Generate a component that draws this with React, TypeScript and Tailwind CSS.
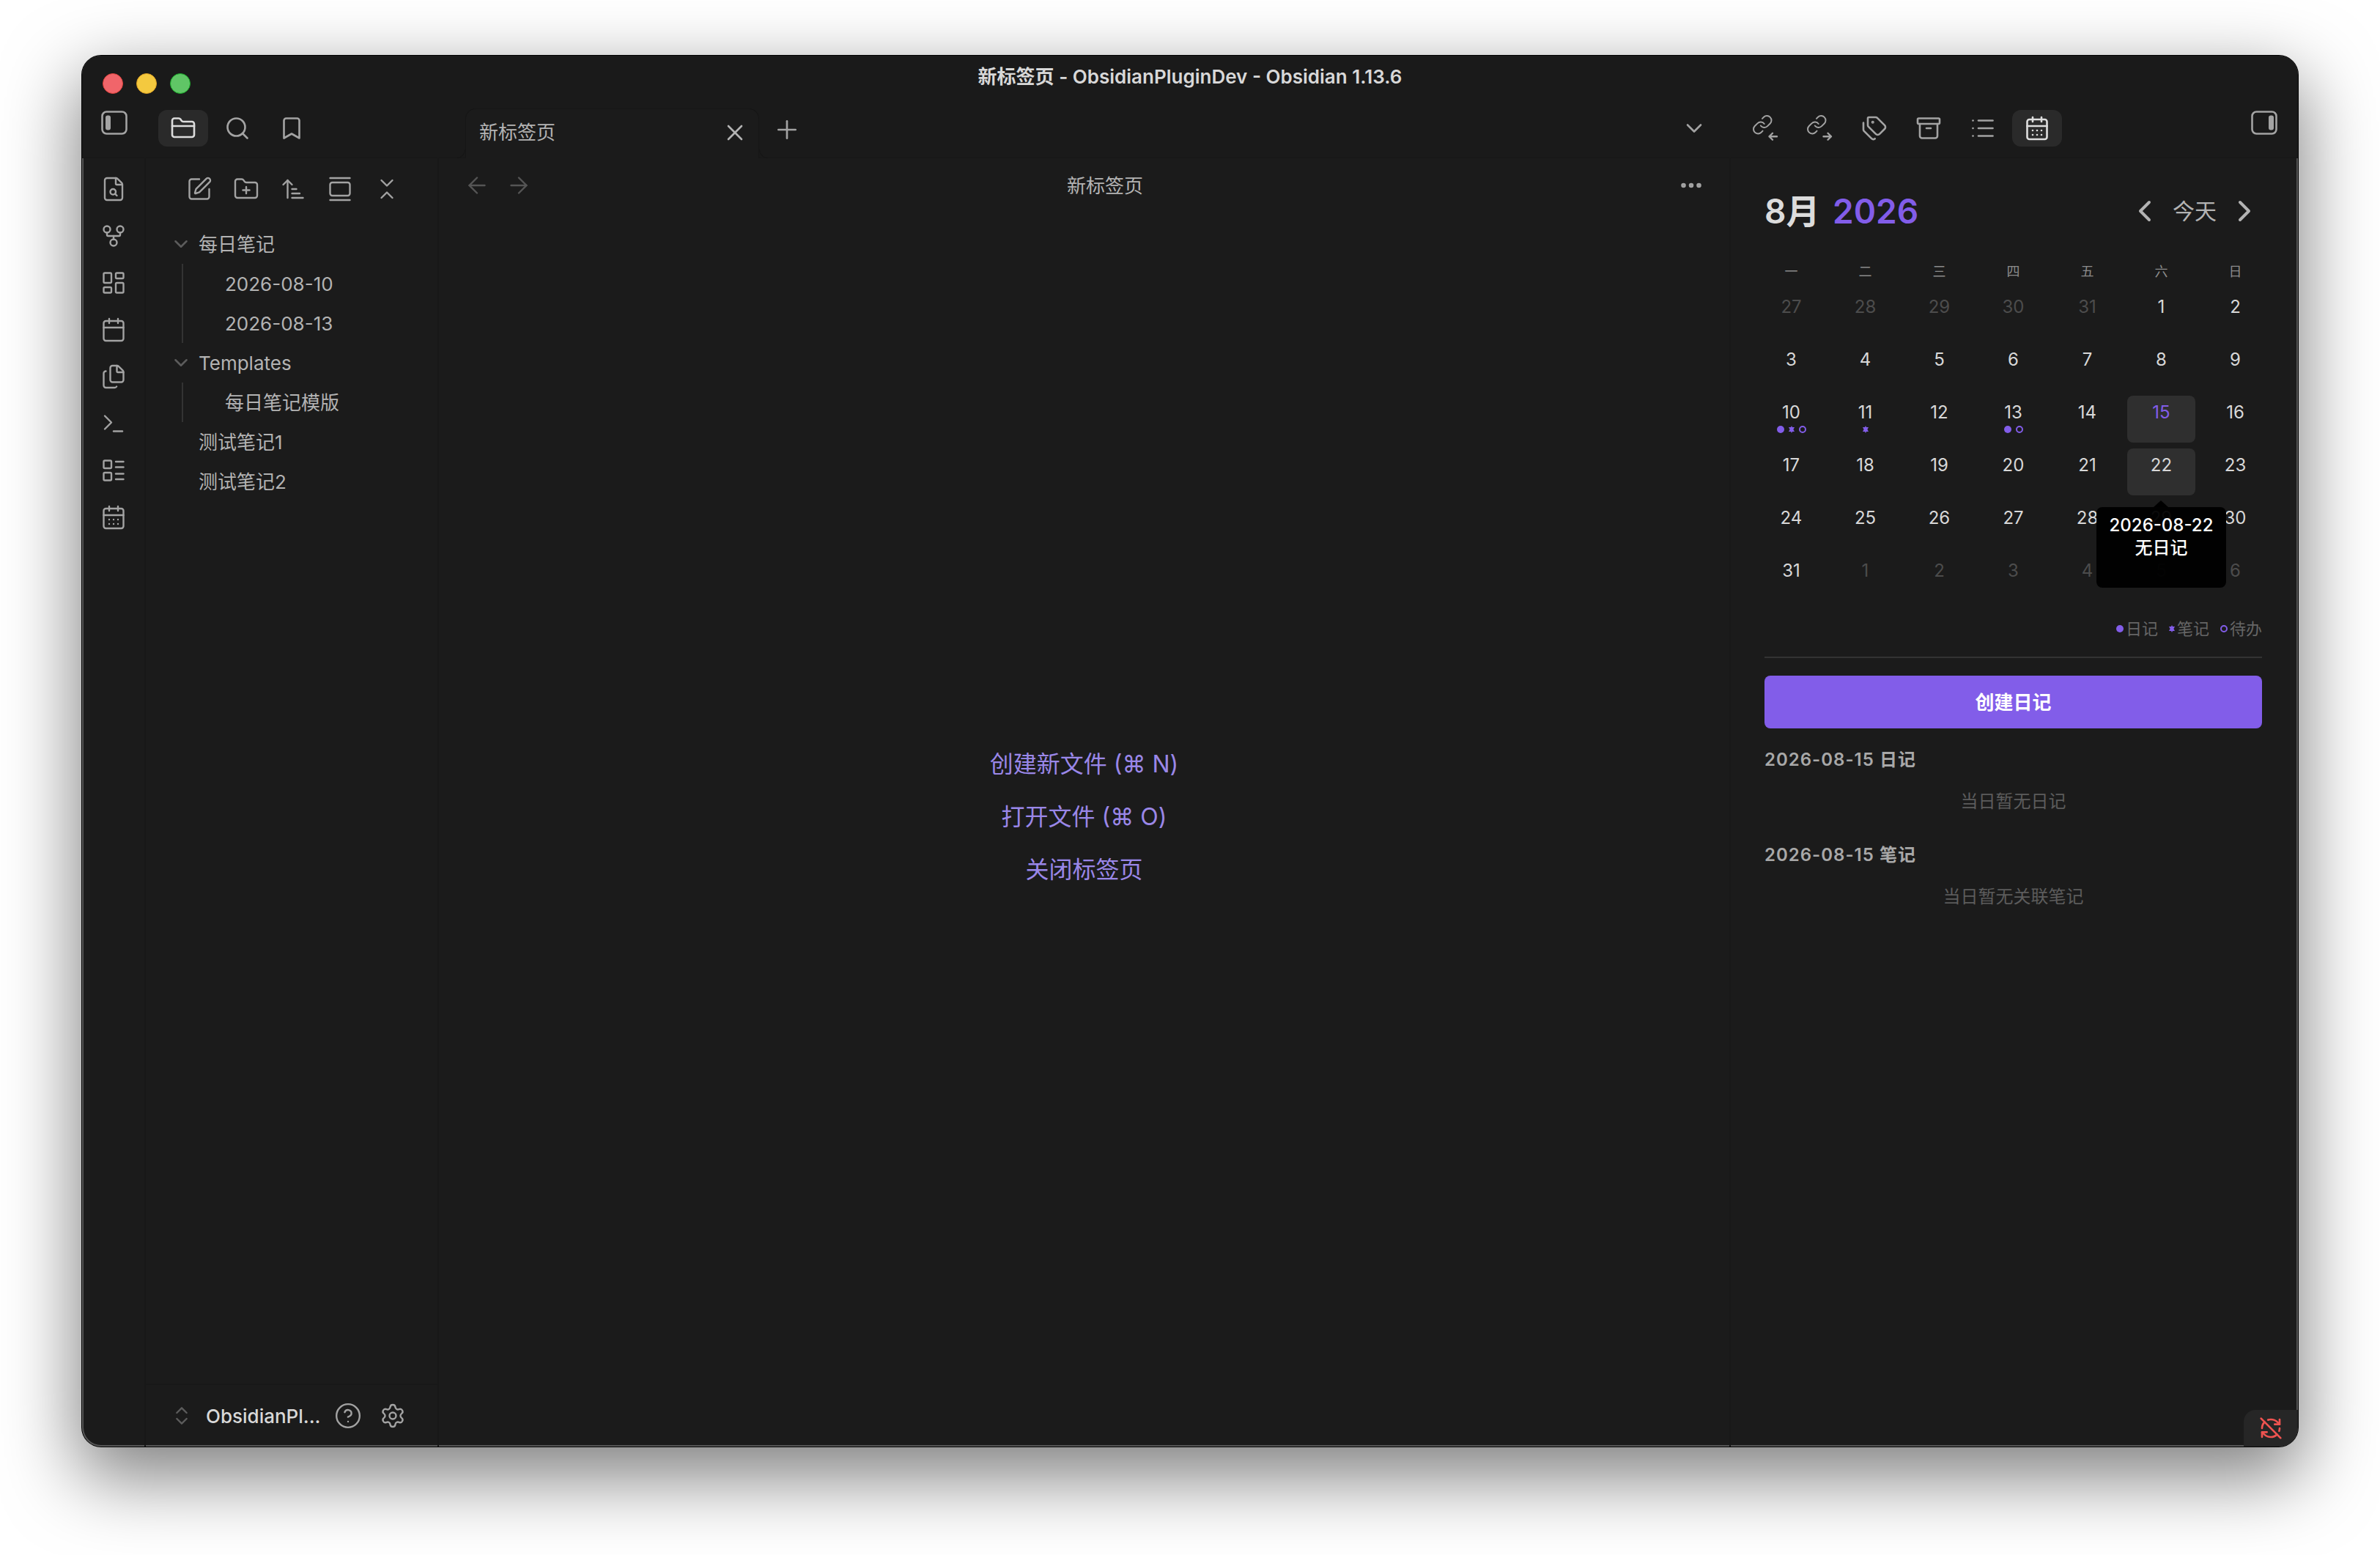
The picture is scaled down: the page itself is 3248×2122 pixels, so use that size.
import {
  Archive,
  ArrowLeft,
  ArrowRight,
  ArrowUpNarrowWide,
  Bookmark,
  Calendar,
  CalendarDays,
  ChevronDown,
  ChevronLeft,
  ChevronRight,
  ChevronsDownUp,
  ChevronsUpDown,
  CircleHelp,
  Ellipsis,
  FileSearch,
  Files,
  FolderClosed,
  FolderPlus,
  GalleryVertical,
  GitFork,
  LayoutDashboard,
  LayoutList,
  List,
  Plus,
  RefreshCwOff,
  Search,
  Settings,
  SquarePen,
  Tags,
  Terminal,
  X,
} from 'lucide-react';
import type { ReactNode } from 'react';

const ribbonIcons = [FileSearch, GitFork, LayoutDashboard, Calendar, Files, Terminal, LayoutList, CalendarDays];
const navIcons = [SquarePen, FolderPlus, ArrowUpNarrowWide, GalleryVertical, ChevronsDownUp];
const weekdays = ['一', '二', '三', '四', '五', '六', '日'];

type Day = { n: number; muted?: boolean; dots?: string[] };

const days: Day[] = [
  ...[27, 28, 29, 30, 31].map((n) => ({ n, muted: true })),
  ...Array.from({ length: 31 }, (_, i) => ({ n: i + 1 })),
  ...[1, 2, 3, 4, 5, 6].map((n) => ({ n, muted: true })),
];
days[14].dots = ['solid', 'star', 'ring'];
days[15].dots = ['star'];
days[17].dots = ['solid', 'ring'];

function Dot({ kind }: { kind: string }) {
  if (kind === 'solid') return <span className="block size-[10px] rounded-full bg-[#825de9]" />;
  if (kind === 'ring') return <span className="block size-[10px] rounded-full border-2 border-[#825de9]" />;
  return (
    <svg width="8" height="10" viewBox="0 0 8 10" className="block fill-[#825de9]">
      <polygon points="4,0 5,2 8,2 6.4,5 8,8 5,8 4,10 3,8 0,8 1.6,5 0,2 3,2" />
    </svg>
  );
}

function PanelToggle({ right }: { right?: boolean }) {
  return (
    <svg width="36" height="33" viewBox="0 0 36 33" fill="none" className="shrink-0">
      <rect x="1.5" y="1.5" width="33" height="30" rx="6" stroke="#a3a3a3" strokeWidth="2.6" />
      <rect x={right ? 24 : 6} y="6.5" width="7" height="20" rx="3" fill="#a3a3a3" />
    </svg>
  );
}

function LinkArrow({ out }: { out?: boolean }) {
  return (
    <svg width="36" height="36" viewBox="0 0 24 24" fill="none" stroke="#a3a3a3" strokeWidth="1.6" strokeLinecap="round" strokeLinejoin="round">
      <g transform="translate(-1 -1) scale(0.82)">
        <path d="M10 13a5 5 0 0 0 7.54.54l3-3a5 5 0 0 0-7.07-7.07l-1.72 1.71" />
        <path d="M14 11a5 5 0 0 0-7.54-.54l-3 3a5 5 0 0 0 7.07 7.07l1.71-1.71" />
      </g>
      {out ? <path d="M15 19.5h7m-3-3 3 3-3 3" /> : <path d="M22 19.5h-7m3-3-3 3 3 3" />}
    </svg>
  );
}

function TabButton({ active, children }: { active?: boolean; children: ReactNode }) {
  return (
    <div
      className={`flex h-[50px] w-[68px] items-center justify-center rounded-[12px] ${
        active ? 'bg-[#2a2a2a] text-[#dcdcdc]' : 'text-[#a3a3a3]'
      }`}
    >
      {children}
    </div>
  );
}

function TreeRow({ indent, chevron, children }: { indent?: boolean; chevron?: boolean; children: ReactNode }) {
  return (
    <div className={`flex h-[54px] items-center text-[26px] text-[#b3b3b3] ${indent ? 'pl-[57px]' : 'pl-[33px]'}`}>
      {chevron && <ChevronDown size={30} strokeWidth={2} className="-ml-[39px] mr-[9px] shrink-0 text-[#5c5c5c]" />}
      {children}
    </div>
  );
}

function LegendItem({ kind, label }: { kind: string; label: string }) {
  return (
    <div className="flex items-center gap-[3px]">
      <Dot kind={kind} />
      <span>{label}</span>
    </div>
  );
}

export default function App() {
  return (
    <div className="h-[2122px] w-[3248px] overflow-hidden bg-white pl-[112px] pt-[76px] font-['Inter','Noto_Sans_CJK_SC',sans-serif]">
      <div className="relative flex h-[1898px] w-[3024px] flex-col overflow-hidden rounded-[26px] bg-[#1b1b1b] shadow-[inset_0_0_0_2px_#555,0_0_0_1px_#000,0_36px_100px_6px_rgba(0,0,0,0.5)]">
        {/* title bar */}
        <div className="grid h-[58px] shrink-0 grid-cols-[1fr_auto_1fr] bg-[#1a1a1a]">
          <div className="flex gap-[18px] pl-[28px] pt-[24px]">
            <span className="size-[28px] rounded-full border border-[#e0443e] bg-[#f1656a]" />
            <span className="size-[28px] rounded-full border border-[#dea123] bg-[#f4c93f]" />
            <span className="size-[28px] rounded-full border border-[#1aab29] bg-[#60c566]" />
          </div>
          <div className="pt-[12px] text-[26px] font-semibold leading-[34px] text-[#d8d8d8]">
            新标签页 - ObsidianPluginDev - Obsidian 1.13.6
          </div>
          <div />
        </div>

        {/* tab row */}
        <div className="flex h-[82px] shrink-0 items-start border-b border-[#171717] bg-[#1a1a1a] pl-[26px] pr-[28px] pt-[14px]">
          <div className="mt-[3px]">
            <PanelToggle />
          </div>
          <div className="ml-[42px] mt-[2px] flex gap-[6px]">
            <TabButton active>
              <FolderClosed size={36} strokeWidth={1.75} />
            </TabButton>
            <TabButton>
              <Search size={36} strokeWidth={1.75} />
            </TabButton>
            <TabButton>
              <Bookmark size={36} strokeWidth={1.75} />
            </TabButton>
          </div>
          <div className="relative ml-[203px] flex h-[68px] w-[401px] items-start rounded-t-[14px] border border-b-0 border-[#161616] bg-[#1b1b1b] pl-[18px] pr-[14px] pt-[14px] text-[26px] leading-[36px] text-[#b3b3b3]">
            <span className="absolute -left-[13px] bottom-0 size-[12px] rounded-br-[12px] border-b border-r border-[#161616]" />
            <span className="absolute -right-[13px] bottom-0 size-[12px] rounded-bl-[12px] border-b border-l border-[#161616]" />
            <span className="flex-1">新标签页</span>
            <X size={36} strokeWidth={1.75} className="text-[#b3b3b3]" />
          </div>
          <Plus size={40} strokeWidth={1.6} className="ml-[18px] mt-[9px] text-[#a3a3a3]" />
          <div className="flex-1" />
          <ChevronDown size={36} strokeWidth={1.75} className="mr-[46px] mt-[9px] text-[#a3a3a3]" />
          <div className="mt-[2px] flex gap-[6px]">
            <TabButton>
              <LinkArrow />
            </TabButton>
            <TabButton>
              <LinkArrow out />
            </TabButton>
            <TabButton>
              <Tags size={36} strokeWidth={1.75} />
            </TabButton>
            <TabButton>
              <Archive size={36} strokeWidth={1.75} />
            </TabButton>
            <TabButton>
              <List size={36} strokeWidth={1.75} />
            </TabButton>
            <TabButton active>
              <CalendarDays size={36} strokeWidth={1.75} />
            </TabButton>
          </div>
          <div className="ml-[258px] mt-[3px]">
            <PanelToggle right />
          </div>
        </div>

        {/* body */}
        <div className="flex min-h-0 flex-1">
          <div className="flex w-[87px] shrink-0 flex-col items-center gap-[28px] border-r-2 border-[#181818] pt-[24px] text-[#a3a3a3]">
            {ribbonIcons.map((Icon, i) => (
              <Icon key={i} size={36} strokeWidth={1.6} />
            ))}
          </div>

          <div className="flex w-[400px] shrink-0 flex-col border-r-2 border-[#181818]">
            <div className="flex gap-[28px] pl-[55px] pt-[24px] text-[#a3a3a3]">
              {navIcons.map((Icon, i) => (
                <Icon key={i} size={36} strokeWidth={1.6} />
              ))}
            </div>
            <div className="mt-[30px] flex-1 pl-[39px]">
              <TreeRow chevron>每日笔记</TreeRow>
              <div className="ml-[10px] border-l-2 border-[#333]">
                <TreeRow indent>2026-08-10</TreeRow>
                <TreeRow indent>2026-08-13</TreeRow>
              </div>
              <TreeRow chevron>Templates</TreeRow>
              <div className="ml-[10px] border-l-2 border-[#333]">
                <TreeRow indent>每日笔记模版</TreeRow>
              </div>
              <TreeRow>测试笔记1</TreeRow>
              <TreeRow>测试笔记2</TreeRow>
            </div>
            <div className="flex h-[86px] shrink-0 items-center border-t-2 border-[#181818] pl-[33px] text-[#a3a3a3]">
              <ChevronsUpDown size={32} strokeWidth={1.75} className="text-[#5c5c5c]" />
              <span className="ml-[17px] w-[175px] text-[26px] font-medium text-[#d8d8d8]">ObsidianPl...</span>
              <CircleHelp size={38} strokeWidth={1.5} />
              <Settings size={36} strokeWidth={1.6} className="ml-[24px]" />
            </div>
          </div>

          <div className="flex min-w-0 flex-1 flex-col">
            <div className="flex h-[74px] shrink-0 items-center px-[34px]">
              <div className="flex gap-[21px] text-[#555]">
                <ArrowLeft size={36} strokeWidth={1.6} />
                <ArrowRight size={36} strokeWidth={1.6} />
              </div>
              <div className="flex-1 text-center text-[26px] text-[#b3b3b3]">新标签页</div>
              <Ellipsis size={36} strokeWidth={2.4} className="text-[#a3a3a3]" />
            </div>
            <div className="flex flex-1 flex-col items-center justify-center gap-[24px] pb-[34px] text-[32px] leading-[48px] text-[#9a87e8]">
              <div>创建新文件 (⌘ N)</div>
              <div>打开文件 (⌘ O)</div>
              <div>关闭标签页</div>
            </div>
          </div>

          <div className="flex w-[776px] shrink-0 flex-col border-l-2 border-[#181818] pl-[46px] pr-[49px] pt-[42px]">
            <div className="flex h-[60px] items-center">
              <div className="flex-1 text-[46px] font-semibold leading-[60px] text-[#dcdcdc]">
                8月 <span className="ml-[6px] text-[#825de9]">2026</span>
              </div>
              <ChevronLeft size={48} strokeWidth={2} className="text-[#b3b3b3]" />
              <span className="mx-[14px] text-[30px] text-[#b3b3b3]">今天</span>
              <ChevronRight size={48} strokeWidth={2} className="text-[#b3b3b3]" />
            </div>

            <div className="-mx-[10px] mt-[39px] grid h-[28px] grid-cols-[repeat(7,93px)] gap-x-[8px] text-center text-[18px] leading-[28px] text-[#8c8c8c]">
              {weekdays.map((d) => (
                <div key={d}>{d}</div>
              ))}
            </div>

            <div className="-mx-[10px] mt-[11px] grid grid-cols-[repeat(7,93px)] gap-x-[8px] gap-y-[8px]">
              {days.map((d, i) => {
                const isToday = i === 19;
                const isHover = i === 26;
                return (
                  <div
                    key={i}
                    className={`relative h-[64px] rounded-[8px] pt-[8px] text-center text-[24px] leading-[30px] ${
                      isToday || isHover ? 'bg-[#2f2f2f]' : ''
                    } ${isToday ? 'text-[#825de9]' : d.muted ? 'text-[#4c4c4c]' : 'text-[#d8d8d8]'}`}
                  >
                    {d.n}
                    {d.dots && (
                      <div className="mt-[3px] flex h-[10px] items-center justify-center gap-[6px]">
                        {d.dots.map((k) => (
                          <Dot key={k} kind={k} />
                        ))}
                      </div>
                    )}
                    {isHover && (
                      <div className="absolute -left-[42px] top-[80px] z-10 h-[110px] w-[177px] rounded-[8px] bg-[#000000f4] pt-[9px] text-[24px] font-medium leading-[31px] text-white">
                        <span className="absolute -top-[9px] left-[78px] size-0 border-x-[10px] border-b-[9px] border-x-transparent border-b-black" />
                        2026-08-22
                        <br />
                        无日记
                      </div>
                    )}
                  </div>
                );
              })}
            </div>

            <div className="mt-[24px] flex h-[28px] items-center justify-end gap-[15px] text-[22px] leading-[28px] text-[#666]">
              <LegendItem kind="solid" label="日记" />
              <LegendItem kind="star" label="笔记" />
              <LegendItem kind="ring" label="待办" />
            </div>

            <div className="mt-[24px] h-[2px] bg-[#333]" />

            <button className="mt-[24px] h-[72px] rounded-[8px] bg-[#825de9] text-[26px] font-bold text-white">创建日记</button>

            <div className="mt-[28px] text-[24px] font-semibold leading-[30px] tracking-[1px] text-[#a8a8a8]">2026-08-15 日记</div>
            <div className="mt-[27px] text-center text-[24px] leading-[30px] text-[#5c5c5c]">当日暂无日记</div>
            <div className="mt-[43px] text-[24px] font-semibold leading-[30px] tracking-[1px] text-[#a8a8a8]">2026-08-15 笔记</div>
            <div className="mt-[27px] text-center text-[24px] leading-[30px] text-[#5c5c5c]">当日暂无关联笔记</div>
          </div>
        </div>

        <div className="absolute bottom-0 right-0 flex h-[50px] w-[74px] items-center justify-center rounded-tl-[16px] bg-[#262626] text-[#ef5350]">
          <RefreshCwOff size={32} strokeWidth={2} />
        </div>
      </div>
    </div>
  );
}
